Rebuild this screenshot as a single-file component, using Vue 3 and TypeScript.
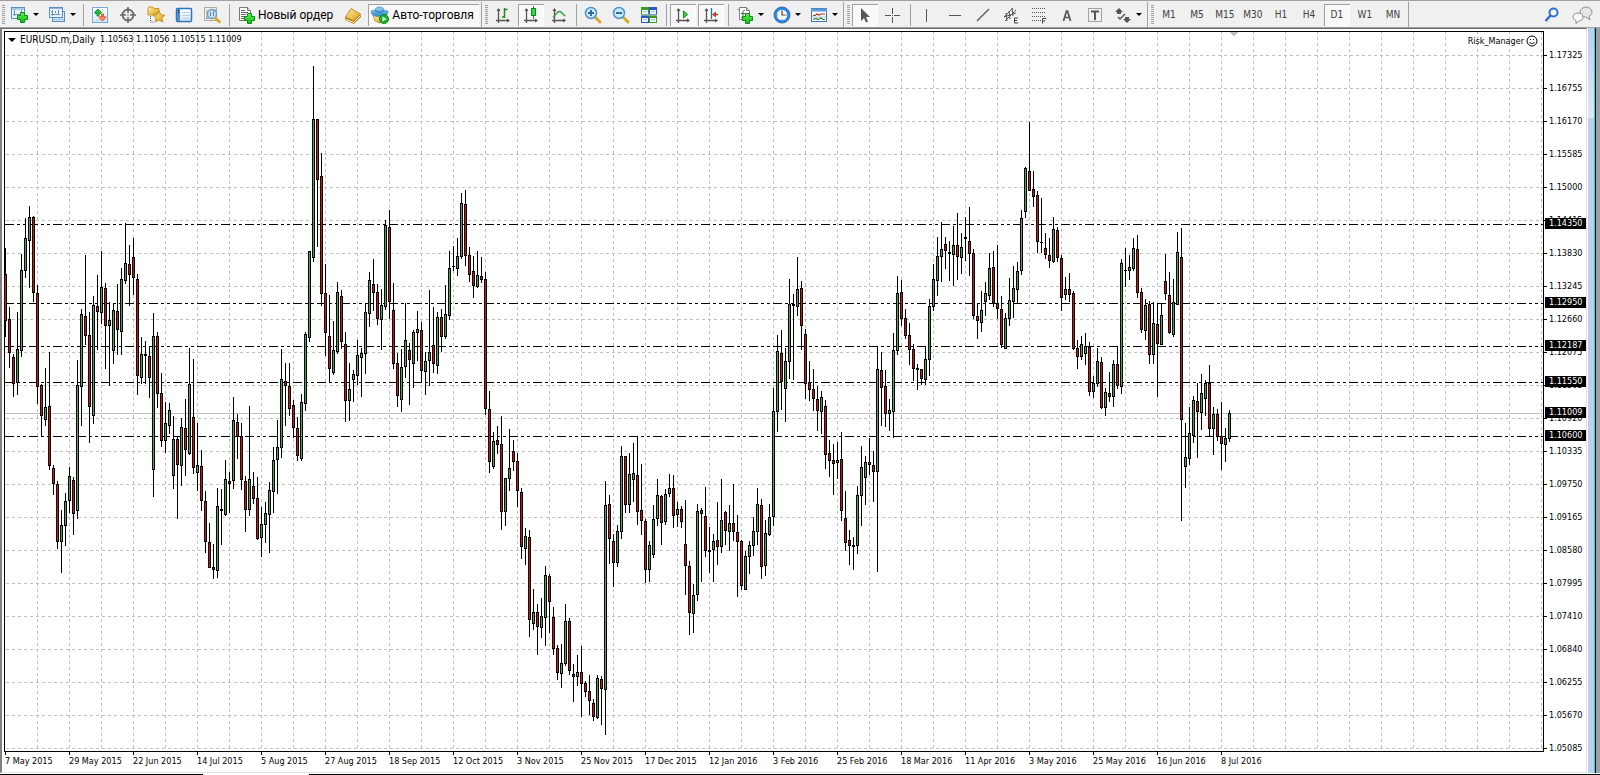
<script setup lang="ts">
interface Tool {
  id: string
  label: string
  kind?: 'menu' | 'sep' | 'text'
  active?: boolean
}

type Candle = [high: number, top: number, bottom: number, low: number, dir: number]

const sep = (id: string): Tool => ({ id, label: '', kind: 'sep' })

const groups: Tool[][] = [
  [
    { id: 'newchart', label: 'Новый график', kind: 'menu' },
    { id: 'profiles', label: 'Профили', kind: 'menu' },
    sep('s1'),
    { id: 'market', label: 'Обзор рынка' },
    { id: 'target', label: 'Окно данных' },
    { id: 'favorites', label: 'Навигатор' },
    { id: 'terminal', label: 'Терминал' },
    { id: 'tester', label: 'Тестер стратегий' },
    sep('s2'),
    { id: 'order', label: 'Новый ордер', kind: 'text' },
    { id: 'editor', label: 'MetaEditor' },
    { id: 'auto', label: 'Авто-торговля', kind: 'text', active: true },
  ],
  [
    { id: 'bars', label: 'Бары' },
    { id: 'candles', label: 'Японские свечи', active: true },
    { id: 'line', label: 'Линия' },
    sep('s3'),
    { id: 'zoomin', label: 'Увеличить' },
    { id: 'zoomout', label: 'Уменьшить' },
    { id: 'tile', label: 'Расположить окна' },
    sep('s4'),
    { id: 'scroll', label: 'Автопрокрутка', active: true },
    { id: 'shift', label: 'Сдвиг графика', active: true },
    sep('s5'),
    { id: 'indicators', label: 'Индикаторы', kind: 'menu' },
    { id: 'clock', label: 'Периоды', kind: 'menu' },
    { id: 'template', label: 'Шаблоны', kind: 'menu' },
  ],
  [
    { id: 'cursor', label: 'Курсор', active: true },
    { id: 'cross', label: 'Перекрестие' },
    sep('s6'),
    { id: 'vline', label: 'Вертикальная линия' },
    { id: 'hline', label: 'Горизонтальная линия' },
    { id: 'trend', label: 'Трендовая линия' },
    { id: 'channel', label: 'Равноудаленный канал' },
    { id: 'fibo', label: 'Линии Фибоначчи' },
    { id: 'text', label: 'Текст' },
    { id: 'textlabel', label: 'Текстовая метка' },
    { id: 'arrows', label: 'Стрелки', kind: 'menu' },
  ],
]

const timeframes = ['M1', 'M5', 'M15', 'M30', 'H1', 'H4', 'D1', 'W1', 'MN']

const prices = [
  '1.17325', '1.16755', '1.16170', '1.15585', '1.15000', '1.14415', '1.13830', '1.13245',
  '1.12660', '1.12075', '1.11505', '1.10920', '1.10335', '1.09750', '1.09165', '1.08580',
  '1.07995', '1.07410', '1.06840', '1.06255', '1.05670', '1.05085',
]

const dates = [
  '7 May 2015', '29 May 2015', '22 Jun 2015', '14 Jul 2015', '5 Aug 2015', '27 Aug 2015',
  '18 Sep 2015', '12 Oct 2015', '3 Nov 2015', '25 Nov 2015', '17 Dec 2015', '12 Jan 2016',
  '3 Feb 2016', '25 Feb 2016', '18 Mar 2016', '11 Apr 2016', '3 May 2016', '25 May 2016',
  '16 Jun 2016', '8 Jul 2016',
]

const levels = [
  { price: '1.14350', y: 224 },
  { price: '1.12950', y: 303 },
  { price: '1.12187', y: 346 },
  { price: '1.11550', y: 382 },
  { price: '1.10600', y: 436 },
]
const current = { price: '1.11009', y: 413 }
const tags = [...levels, current]

const axisTop = 31
const vLines = Array.from({ length: 90 }, (_, i) => 37 + i * 32)
const hLines = Array.from({ length: 22 }, (_, i) => 55 + i * 33)

const D = 0
const U = 1
const candles: Candle[] = [
  [248,274,321,337,D],[307,319,353,368,D],[354,357,384,397,D],[312,349,383,395,U],[254,270,351,357,U],
  [218,238,271,278,U],[206,217,241,288,U],[216,217,293,302,D],[285,293,387,404,D],[384,385,416,437,D],
  [368,407,420,426,U],[352,406,466,470,D],[465,468,484,495,D],[481,484,542,549,D],[510,525,542,573,U],
  [493,501,526,546,U],[467,476,501,513,U],[477,480,514,535,D],[360,385,511,519,U],[309,314,387,426,U],
  [255,316,336,345,D],[312,335,407,443,D],[296,305,416,424,U],[275,306,312,350,D],[251,287,313,324,U],
  [283,288,326,369,D],[302,320,326,386,U],[303,310,351,364,U],[284,311,330,355,D],[268,279,332,355,U],
  [223,263,281,284,U],[245,264,275,306,D],[238,257,278,295,D],[274,279,376,395,D],[337,354,378,384,U],
  [341,354,356,384,U],[347,356,378,398,D],[313,336,470,497,U],[332,336,394,408,D],[373,393,441,447,D],
  [402,423,441,453,U],[403,410,426,434,U],[416,439,476,489,U],[436,439,465,519,D],[418,427,466,486,U],
  [399,428,450,476,D],[348,384,454,455,U],[359,417,468,474,D],[423,465,473,491,U],[450,466,501,511,D],
  [491,501,542,553,D],[523,542,568,568,D],[544,567,570,579,D],[488,506,571,578,U],[489,509,511,545,U],
  [460,479,515,516,U],[472,481,484,513,D],[397,420,481,489,U],[414,422,437,459,D],[423,436,480,490,D],
  [476,481,510,532,D],[406,479,510,516,U],[472,486,499,504,D],[477,498,539,540,D],[507,524,538,557,U],
  [502,513,525,543,U],[482,490,515,553,U],[447,460,492,513,U],[420,447,460,494,U],[349,379,448,458,U],
  [363,381,386,426,D],[363,386,409,416,D],[400,405,428,438,D],[417,428,456,461,D],[394,402,459,461,U],
  [332,334,404,411,U],[251,251,338,342,U],[66,119,258,262,U],[119,119,180,247,D],[153,176,294,306,D],
  [264,293,333,356,D],[295,336,369,383,D],[321,350,373,375,U],[282,292,352,354,U],[290,296,342,349,D],
  [332,344,401,422,D],[363,389,401,421,U],[370,374,380,402,U],[340,355,376,385,U],[348,353,358,397,U],
  [303,312,354,374,U],[272,280,314,327,U],[259,284,293,311,D],[284,292,319,325,D],[289,305,320,350,U],
  [220,225,307,310,U],[210,227,302,319,D],[283,310,364,369,D],[353,363,396,407,D],[349,367,400,412,U],
  [303,340,367,378,U],[343,350,360,405,D],[330,332,364,388,U],[311,329,333,361,U],[322,330,371,383,D],
  [352,361,372,395,U],[290,352,361,386,U],[307,345,364,373,D],[312,317,366,374,U],[309,317,337,352,D],
  [285,314,337,339,U],[251,268,316,320,U],[246,266,267,271,U],[238,256,269,276,U],[193,203,257,259,U],
  [190,204,256,266,D],[247,255,275,282,D],[256,271,286,298,D],[251,275,287,288,U],[257,276,280,283,D],
  [272,279,409,415,D],[391,409,462,473,D],[432,441,467,469,U],[426,440,445,454,D],[416,444,512,530,D],
  [478,478,512,526,U],[429,468,479,491,U],[440,451,462,471,D],[453,461,491,507,D],[488,492,547,559,D],
  [528,536,549,565,U],[530,537,620,637,D],[589,612,624,630,U],[604,612,627,655,D],[598,616,628,638,U],
  [566,575,618,646,U],[574,576,602,633,D],[607,617,649,655,D],[645,648,673,680,D],[644,663,674,688,U],
  [604,621,664,666,U],[618,621,671,675,D],[664,674,677,702,D],[655,672,677,686,U],[646,672,684,717,D],
  [681,683,692,697,D],[675,691,701,715,D],[699,703,717,721,D],[675,678,718,719,U],[676,679,689,725,D],
  [481,505,690,735,U],[495,504,539,564,D],[534,541,563,587,D],[525,531,563,567,U],[446,456,532,539,U],
  [456,456,505,513,D],[453,474,505,513,U],[443,473,480,502,U],[436,475,512,525,D],[464,510,521,535,D],
  [519,521,570,583,D],[541,545,570,582,U],[505,519,555,558,U],[479,495,519,526,U],[495,496,523,545,D],
  [489,494,522,525,U],[474,488,494,497,U],[475,488,516,528,D],[502,509,515,527,U],[506,509,522,528,D],
  [500,544,566,595,D],[561,566,613,635,D],[584,595,614,633,U],[504,511,595,601,U],[508,510,514,582,D],
  [487,516,551,557,D],[527,550,552,573,D],[534,541,550,582,U],[502,540,547,565,D],[479,520,547,553,U],
  [511,512,531,545,D],[505,523,532,551,U],[484,523,532,541,D],[515,532,542,597,D],[540,541,586,590,D],
  [551,556,590,590,U],[541,545,557,574,U],[517,531,546,556,U],[488,504,532,545,U],[499,505,567,579,D],
  [520,533,566,576,U],[504,517,535,536,U],[388,411,517,526,U],[335,351,412,432,U],[330,353,382,410,D],
  [348,361,389,422,U],[279,304,362,379,U],[294,304,306,380,U],[257,289,307,316,U],[281,288,326,350,D],
  [329,334,384,399,D],[361,382,390,401,D],[369,389,399,411,D],[386,399,411,431,D],[391,397,412,434,U],
  [400,406,455,469,D],[440,453,461,477,D],[444,460,464,495,D],[442,460,463,479,U],[432,459,511,521,D],
  [491,518,543,551,D],[530,540,546,565,D],[537,545,547,570,D],[486,495,546,554,U],[446,467,496,526,U],
  [456,462,478,505,U],[438,462,465,475,D],[451,465,472,502,D],[346,369,472,572,U],[352,370,388,426,D],
  [370,386,414,427,D],[399,410,414,431,U],[333,350,412,438,U],[276,293,351,355,U],[280,292,319,326,D],
  [309,318,336,339,D],[323,335,350,365,D],[344,349,369,381,D],[364,368,370,390,D],[369,369,379,385,D],
  [346,359,380,385,U],[299,306,360,376,U],[264,279,307,311,U],[237,256,281,296,U],[222,249,257,282,U],
  [237,244,251,269,D],[241,252,254,281,D],[226,245,255,286,U],[213,245,257,280,D],[233,247,258,274,U],
  [217,237,239,261,U],[207,241,254,276,D],[249,253,316,319,D],[303,316,321,339,D],[291,310,323,332,U],
  [282,293,302,316,U],[253,268,296,300,U],[251,267,303,307,D],[245,303,309,319,D],[296,309,345,348,D],
  [313,318,349,349,U],[278,300,319,326,U],[266,288,302,318,U],[262,271,290,303,U],[210,218,271,275,U],
  [167,168,212,218,U],[122,171,191,191,D],[171,189,197,207,D],[191,195,242,253,D],[198,242,243,253,D],
  [233,248,255,259,D],[238,255,261,268,D],[217,229,262,263,U],[227,230,258,262,D],[255,258,298,311,D],
  [277,289,295,300,U],[273,289,295,302,D],[291,293,349,350,D],[340,348,357,369,D],[336,344,357,360,U],
  [333,346,354,365,U],[342,347,392,396,D],[376,383,392,398,U],[348,361,384,387,U],[357,362,408,409,D],
  [388,392,408,416,U],[372,393,397,402,D],[360,364,397,407,U],[346,364,386,389,D],[259,263,387,394,U],
  [248,270,271,287,U],[255,267,271,280,U],[238,248,269,271,U],[235,249,293,298,D],[288,292,330,333,D],
  [299,305,331,340,U],[301,304,355,364,D],[302,323,355,364,U],[303,324,344,397,D],[303,315,345,345,U],
  [254,281,294,300,D],[272,295,333,334,D],[279,302,335,337,U],[232,252,305,305,U],[228,257,420,521,D],
  [423,457,467,488,U],[407,433,459,465,U],[396,400,436,443,U],[383,401,412,458,D],[374,393,413,430,U],
  [380,383,399,416,U],[365,383,429,437,D],[407,414,429,455,U],[409,414,437,441,D],[402,436,444,470,D],
  [428,438,445,462,U],[410,413,439,442,U],
]

const candleX = (i: number) => 5 + i * 4
const box = (x: number, y: number, w: number, h: number) => `M${x} ${y}h${w}v${h}h${-w}z`

const wicks = candles.map(([h, , , l], i) => box(candleX(i), h, 1, l - h)).join('')
const bodies = candles.map(([, t, b], i) => box(candleX(i) - 1, t, 3, b - t)).join('')
const fills = (dir: number) =>
  candles
    .map(([, t, b, , d], i) => (d === dir && b - t > 2 ? box(candleX(i), t + 1, 1, b - t - 2) : ''))
    .join('')
const bullFill = fills(U)
const bearFill = fills(D)
</script>

<template>
  <svg class="defs" aria-hidden="true">
    <defs>
      <linearGradient id="gGreen" x1="0" y1="0" x2="0" y2="1"><stop offset="0" stop-color="#5cf05c" /><stop offset="1" stop-color="#12b812" /></linearGradient>
      <linearGradient id="gGold" x1="0" y1="0" x2="1" y2="1"><stop offset="0" stop-color="#fff0a0" /><stop offset="1" stop-color="#d89a18" /></linearGradient>
      <linearGradient id="gBlue" x1="0" y1="0" x2="0" y2="1"><stop offset="0" stop-color="#9ad2f6" /><stop offset="1" stop-color="#2f86c8" /></linearGradient>
      <linearGradient id="gPane" x1="0" y1="0" x2="0" y2="1"><stop offset="0" stop-color="#ffffff" /><stop offset="1" stop-color="#d5e6f6" /></linearGradient>
    </defs>
    <symbol id="i-newchart" viewBox="0 0 18 18">
      <rect x=".5" y="1.500" width="13" height="11" fill="#e8f2fb" stroke="#5b8dbd" /><path d="M1 3h12" stroke="#a9c9e8" stroke-width="2" />
      <path d="M3.500 4v6M2 8.500h9M10.500 4v5" stroke="#6f93b5" fill="none" />
      <path d="M9.500 6.500h4v3h3v4h-3v3h-4v-3h-3v-4h3z" fill="url(#gGreen)" stroke="#0b8f16" />
    </symbol>
    <symbol id="i-profiles" viewBox="0 0 18 18">
      <rect x="4.500" y="5.500" width="12" height="10" fill="#e8f2fb" stroke="#5b8dbd" /><path d="M5 13.500h11" stroke="#a9c9e8" stroke-width="2" />
      <rect x="1.500" y="1.500" width="13" height="10" fill="#e8f2fb" stroke="#5b8dbd" /><path d="M2 2.500h12" stroke="#8fb7de" />
      <path d="M4.500 4v6M3 8.500h9M7.500 5v2M10.500 4v4M3 5.500h2" stroke="#6f93b5" />
    </symbol>
    <symbol id="i-market" viewBox="0 0 18 18">
      <rect x="1.500" y="1.500" width="15" height="15" fill="url(#gPane)" stroke="#78a9d8" /><path d="M4 5h2m-2 3h2m5-4h3m-3 8h3m-9 2h4" stroke="#c5d3e0" />
      <path d="m7 3 3.500 3.500-1.500 1.500-1-1v3H6V7L5 8 3.500 6.500z" fill="#22c02e" stroke="#0b8f16" stroke-width=".8" />
      <path d="m11.500 15-3.500-3.500 1.500-1.500 1 1V8h2v3l1-1 1.500 1.500z" fill="#ff8a60" stroke="#d03c1c" stroke-width=".8" />
    </symbol>
    <symbol id="i-target" viewBox="0 0 18 18">
      <circle cx="9" cy="9" r="5.500" fill="none" stroke="#6a6a6a" stroke-width="1.800" /><path d="M9 1v6M9 11v6M1 9h6M11 9h6" stroke="#6a6a6a" stroke-width="1.500" /><circle cx="9" cy="9" r="1" fill="#aaa" />
    </symbol>
    <symbol id="i-favorites" viewBox="0 0 18 18">
      <path d="M1 8V2l1-1h4l1 1.500h5V9H1z" fill="url(#gGold)" stroke="#c99a2a" /><path d="M3.500 10v6h4" stroke="#555" stroke-dasharray="1 1" fill="none" />
      <path d="m12 5 1.800 3.700 4 .5-3 2.700.8 4-3.600-2-3.600 2 .8-4-3-2.700 4-.5z" fill="url(#gGold)" stroke="#c88f1c" />
    </symbol>
    <symbol id="i-terminal" viewBox="0 0 18 18">
      <rect x="1.500" y="2.500" width="15" height="13" rx="1" fill="url(#gPane)" stroke="#2f74bd" stroke-width="1.500" /><path d="M3.500 3v12" stroke="#4b8ed0" stroke-width="3" /><path d="M3.500 4v1m0 1v1" stroke="#123" stroke-width="1" /><path d="M7 6.500h8m-8 3h8m-8 3h8" stroke="#b8cfe6" />
    </symbol>
    <symbol id="i-tester" viewBox="0 0 18 18">
      <path d="M1.500 1.500h12v13h-12z" fill="#f3f0ea" stroke="#b7a98f" /><path d="M4 4v9M12 3v3M6 4h5M3 12h4" stroke="#6d93bd" />
      <circle cx="9" cy="8" r="4.500" fill="#bfe0f5" fill-opacity=".85" stroke="#6e9cc4" stroke-width="1.300" /><path d="M7.500 6v4m3-5v5" stroke="#5e86ae" /><path d="m12.500 12 4 4" stroke="#d9a62c" stroke-width="2.500" stroke-linecap="round" />
    </symbol>
    <symbol id="i-order" viewBox="0 0 18 18">
      <path d="M1.500 1.500h8l3 3v10h-11z" fill="#fff" stroke="#777" /><path d="M9.500 1.500v3h3" fill="#ddd" stroke="#777" /><path d="M3 4.500h4m-4 2h7m-7 2h5m-5 2h4m-4 2h4" stroke="#666" />
      <path d="M9.500 7.500h4v3h3v4h-3v3h-4v-3h-3v-4h3z" fill="url(#gGreen)" stroke="#0b8f16" />
    </symbol>
    <symbol id="i-editor" viewBox="0 0 18 18">
      <path d="M1.500 11.500 10 15l6.500-7v3L10 17.500 2 14z" fill="#c98a18" stroke="#9d6a10" stroke-width=".8" />
      <path d="m2 13.500 8 3 6.500-7" fill="none" stroke="#fff3cc" />
      <path d="M1.500 11 7 2.500 16.500 8 10 15z" fill="url(#gGold)" stroke="#b87d14" stroke-width=".8" />
    </symbol>
    <symbol id="i-auto" viewBox="0 0 18 18">
      <path d="M2 9h13l-1 5-5 3-5-2z" fill="url(#gGold)" stroke="#c99a2a" />
      <path d="M0 6c0-2 2-1.500 4-1.500C4 2 6 1 8.500 1S13 2 13 4.500c2 0 4-.5 4 1.500 0 3-4 4.500-8.500 4.500S0 9 0 6z" fill="url(#gBlue)" stroke="#4a93c4" stroke-width=".8" /><path d="M4 4.500c2 2 7 2 9 0" stroke="#2a74ad" fill="none" />
      <circle cx="13" cy="13" r="4.500" fill="#18b428" stroke="#0a8a18" /><path d="m11.500 10.500 4 2.500-4 2.500z" fill="#fff" />
    </symbol>
    <symbol id="i-bars" viewBox="0 0 18 18">
      <path d="M4.500 3v14M2 14.500h13" stroke="#555" stroke-width="1.300" /><path d="m2.500 5 2-3 2 3zM13 12.500l3 2-3 2z" fill="#555" /><path d="M10.500 2v10M8 11h3M10 3.500h3.500" stroke="#1f8c28" stroke-width="1.500" />
    </symbol>
    <symbol id="i-candles" viewBox="0 0 18 18">
      <path d="M4.500 3v14M2 14.500h13" stroke="#555" stroke-width="1.300" /><path d="m2.500 5 2-3 2 3zM13 12.500l3 2-3 2z" fill="#555" /><path d="M11.500 0v13" stroke="#1f8c28" /><rect x="9.500" y="2.500" width="4" height="7" fill="#30d848" stroke="#128a20" />
    </symbol>
    <symbol id="i-line" viewBox="0 0 18 18">
      <path d="M4.500 3v14M2 14.500h13" stroke="#555" stroke-width="1.300" /><path d="m2.500 5 2-3 2 3zM13 12.500l3 2-3 2z" fill="#555" /><path d="M3 11.500c3-3 4-6 6.500-6s3 3 6 4.500" stroke="#2f9e3a" stroke-width="1.300" fill="none" />
    </symbol>
    <symbol id="i-zoomin" viewBox="0 0 18 18">
      <path d="m11 11 5 5" stroke="#d9a62c" stroke-width="3" stroke-linecap="round" /><circle cx="7" cy="7" r="5.500" fill="#cfe9fb" stroke="#4a94d2" stroke-width="1.500" /><path d="M7 4v6M4 7h6" stroke="#2d6ea8" stroke-width="2" />
    </symbol>
    <symbol id="i-zoomout" viewBox="0 0 18 18">
      <path d="m11 11 5 5" stroke="#d9a62c" stroke-width="3" stroke-linecap="round" /><circle cx="7" cy="7" r="5.500" fill="#cfe9fb" stroke="#4a94d2" stroke-width="1.500" /><path d="M4 7h6" stroke="#2d6ea8" stroke-width="2" />
    </symbol>
    <symbol id="i-tile" viewBox="0 0 18 18">
      <path d="M1 1h8v8H1z" fill="#3f9c1e" /><path d="M9 1h8v8H9z" fill="#2b56c8" /><path d="M1 9h8v8H1z" fill="#2b56c8" /><path d="M9 9h8v8H9z" fill="#3f9c1e" /><path d="M2 4h6v4H2zm8 0h6v4h-6zM2 12h6v4H2zm8 0h6v4h-6z" fill="#eef4fb" /><path d="M3 5.500h4m4 0h4m-12 8h4m4 0h4" stroke="#a9c2dd" /><path d="M1 9h16" stroke="#fff" stroke-width=".7" />
    </symbol>
    <symbol id="i-scroll" viewBox="0 0 18 18">
      <path d="M4.500 3v14M2 14.500h13" stroke="#555" stroke-width="1.300" /><path d="m2.500 5 2-3 2 3zM13 12.500l3 2-3 2z" fill="#555" /><path d="m9.500 5 4 3.500-4 3.500z" fill="#38d84a" stroke="#128a20" />
    </symbol>
    <symbol id="i-shift" viewBox="0 0 18 18">
      <path d="M4.500 3v14M2 14.500h13" stroke="#555" stroke-width="1.300" /><path d="m2.500 5 2-3 2 3zM13 12.500l3 2-3 2z" fill="#555" /><path d="M9.500 2v11" stroke="#1b6fb0" stroke-width="1.300" /><path d="M12 8.500h4" stroke="#c23a1a" stroke-width="1.500" /><path d="m10 8.500 4-3v6z" fill="#c23a1a" />
    </symbol>
    <symbol id="i-indicators" viewBox="0 0 18 18">
      <path d="M3.500 1.500h7l3 3v9h-10z" fill="#fff" stroke="#777" /><path d="M10.500 1.500v3h3" fill="#ddd" stroke="#777" /><path d="M1.500 3.500h2v10h6" fill="none" stroke="#888" /><path d="M9 4.500c-2-1-2 1-2 3v3c0 1 0 2-2 1M5 7.500h4" fill="none" stroke="#555" />
      <path d="M9.500 7.500h4v3h3v4h-3v3h-4v-3h-3v-4h3z" fill="url(#gGreen)" stroke="#0b8f16" />
    </symbol>
    <symbol id="i-clock" viewBox="0 0 18 18">
      <circle cx="9" cy="9" r="6.500" fill="#f7fbff" stroke="#2a86e0" stroke-width="2.500" /><circle cx="9" cy="9" r="8" fill="none" stroke="#0e4c9c" stroke-width=".8" /><path d="M9 5v4h3.500" fill="none" stroke="#444" stroke-width="1.200" /><path d="M9 4v1M9 13v1M4 9h1M13 9h1" stroke="#888" />
    </symbol>
    <symbol id="i-template" viewBox="0 0 18 18">
      <rect x="1.500" y="2.500" width="15" height="13" fill="#fff" stroke="#3c78b8" /><path d="M1 4h16" stroke="#5b9ad8" stroke-width="3" /><path d="M3 9.500h2l2-1.500 2 1 2-1h4" fill="none" stroke="#a8341f" stroke-width="1.200" /><path d="M2 11h14" stroke="#a9c2dd" /><path d="M3 13.500 6 12.500l2 1 3-1.500 2 1.500h2" fill="none" stroke="#2d8a38" stroke-width="1.200" />
    </symbol>
    <symbol id="i-cursor" viewBox="0 0 18 18"><path d="M5 2v13l3-3 2 4.500 2-1-2-4.500h4z" fill="#555" /></symbol>
    <symbol id="i-cross" viewBox="0 0 18 18"><path d="M8.500 2v6m0 3v6M1 9.500h6m3 0h6" stroke="#555" /><path d="M8 9h1v1H8z" fill="#555" /></symbol>
    <symbol id="i-vline" viewBox="0 0 18 18"><path d="M8.500 3v13" stroke="#555" /></symbol>
    <symbol id="i-hline" viewBox="0 0 18 18"><path d="M3 9.500h12" stroke="#555" /></symbol>
    <symbol id="i-trend" viewBox="0 0 18 18"><path d="M3 15 15 3" stroke="#555" stroke-width="1.200" /></symbol>
    <symbol id="i-channel" viewBox="0 0 18 18"><path d="m2 11 9-9M3 15 14 4M4 7l1 8M7 5l1 8m2-11 1 8M2 11l12-4" stroke="#555" fill="none" /><path d="M16 12h-3.500v5H16m-3.500-2.500H15" stroke="#444" fill="none" /></symbol>
    <symbol id="i-fibo" viewBox="0 0 18 18"><path d="M2 2.500h14M2 6.500h14M2 10.500h14M2 14.500h9" stroke="#555" stroke-dasharray="1 1" /><path d="M16 12.500h-3.500v5m0-2.500H15" stroke="#444" fill="none" /></symbol>
    <symbol id="i-text" viewBox="0 0 18 18"><path d="M5.500 15 8.500 5h1l3 10M6.500 11.500h5" stroke="#555" stroke-width="1.700" fill="none" /></symbol>
    <symbol id="i-textlabel" viewBox="0 0 18 18"><rect x="2.500" y="2.500" width="13" height="13" fill="none" stroke="#555" stroke-dasharray="1 1" /><path d="M5 5.500h8M9 5v9" stroke="#555" stroke-width="2" fill="none" /></symbol>
    <symbol id="i-arrows" viewBox="0 0 18 18"><path d="m5 2 4 4H7v2H3V6H1zM13 17l-4-4h2v-2h4v2h2z" fill="#555" /><path d="m4 11 2 2 5-5" fill="none" stroke="#555" stroke-width="1.500" /></symbol>
  </svg>

  <div class="terminal">
    <header class="toolbar">
      <div v-for="(group, g) in groups" :key="g" class="group">
        <span class="grip"></span>
        <template v-for="tool in group" :key="tool.id">
          <span v-if="tool.kind === 'sep'" class="separator"></span>
          <button v-else type="button" class="tool" :class="[tool.kind, { active: tool.active }]" :aria-label="tool.label">
            <svg class="icon"><use :href="'#i-' + tool.id" /></svg>
            <span v-if="tool.kind === 'text'">{{ tool.label }}</span>
            <span v-if="tool.kind === 'menu'" class="caret"></span>
          </button>
        </template>
      </div>
      <div class="group">
        <span class="grip"></span>
        <button v-for="tf in timeframes" :key="tf" type="button" class="tool timeframe" :class="{ active: tf === 'D1' }">{{ tf }}</button>
      </div>
      <div class="extras">
        <button type="button" class="extra" aria-label="Поиск">
          <svg width="18" height="18" viewBox="0 0 18 18"><circle cx="10.500" cy="6.500" r="4" fill="#f4f8fe" stroke="#2e6fd6" stroke-width="2" /><path d="m7.500 9.500-5 5.500" stroke="#2e6fd6" stroke-width="2.500" /></svg>
        </button>
        <button type="button" class="extra" aria-label="Сообщения">
          <svg width="24" height="20" viewBox="0 0 24 20"><path d="M9 7a6 5 0 1 1 9 4.500l1 3.500-4-3A6 5 0 0 1 9 7z" fill="#e6e6e6" stroke="#8e8e8e" /><path d="M2 12a5 4 0 1 1 6 4l-3 2.500V15.500A5 4 0 0 1 2 12z" fill="#fafafa" stroke="#8e8e8e" /></svg>
        </button>
      </div>
    </header>

    <div class="workspace">
      <main class="chart">
        <div class="upper">
          <section class="plot">
            <svg class="canvas" role="img" aria-label="EURUSD.m, Daily" shape-rendering="crispEdges">
              <g transform="translate(-5 -32)">
                <g class="grid">
                  <line v-for="x in vLines" :key="x" :x1="x + 0.5" :x2="x + 0.5" y1="31" y2="751" />
                  <line v-for="y in hLines" :key="y" x1="6" x2="2900" :y1="y + 0.5" :y2="y + 0.5" />
                </g>
                <rect class="bid" x="5" :y="current.y" width="2900" height="1" />
                <line v-for="l in levels" :key="l.y" class="level" x1="5" x2="2900" :y1="l.y + 0.5" :y2="l.y + 0.5" />
                <path :d="wicks" fill="#000" />
                <path :d="bodies" fill="#000" />
                <path :d="bullFill" class="bull" />
                <path :d="bearFill" class="bear" />
                <path d="M1229 32h9l-4 4h-1z" fill="#c0c0c0" />
              </g>
            </svg>
            <div class="caption"><span class="caret"></span><span class="symbol">EURUSD.m,Daily</span><span>1.10563 1.11056 1.10515 1.11009</span></div>
            <div class="expert">
              <span>Risk_Manager</span>
              <svg width="12" height="12" viewBox="0 0 12 12"><circle cx="6" cy="6" r="5" fill="#fff" stroke="#000" /><path d="M4 4h1v1H4zm3 0h1v1H7z" /><path d="M3.500 7c1 2 4 2 5 0" fill="none" stroke="#000" /></svg>
            </div>
          </section>
          <aside class="prices">
            <div v-for="p in prices" :key="p" class="price">{{ p }}</div>
            <div v-for="t in tags" :key="t.price" class="tag" :style="{ top: t.y - axisTop - 6 + 'px' }">{{ t.price }}</div>
          </aside>
        </div>
        <footer class="dates">
          <span v-for="d in dates" :key="d" class="date">{{ d }}</span>
        </footer>
      </main>
      <div class="edge"><span class="thumb"></span></div>
    </div>
    <div class="taskline"><span></span></div>
  </div>
</template>

<style>
body { margin: 0; background: #fff; }
</style>

<style scoped>
.defs { position: absolute; width: 0; height: 0; }
.terminal {
  display: flex;
  flex-direction: column;
  height: 100vh;
  overflow: hidden;
  background: #fff;
  color: #000;
  font: 9px/11px "DejaVu Sans Condensed", "DejaVu Sans", sans-serif;
}
button { margin: 0; border: 0; background: none; color: inherit; font: inherit; }

.toolbar {
  display: flex;
  flex: none;
  height: 25px;
  padding-top: 1px;
  border-top: 1px solid #a0a0a0;
  border-bottom: 1px solid #a0a0a0;
  background: #f0f0f0;
}
.group {
  display: flex;
  align-items: center;
  padding: 0 1px 0 2px;
  border-right: 1px solid #a0a0a0;
}
.group + .group { padding-left: 3px; }
.grip {
  width: 3px;
  height: 20px;
  margin-right: 1px;
  background: repeating-linear-gradient(#a0a0a0 0 1px, #f0f0f0 1px 2px);
}
.separator { width: 1px; height: 22px; margin: 0 2px 0 3px; background: #a0a0a0; }
.tool {
  display: flex;
  flex: none;
  align-items: center;
  justify-content: center;
  width: 28px;
  height: 24px;
  padding: 0;
}
.tool.active {
  width: 26px;
  height: 22px;
  margin: 0 1px;
  background: #f8f8f8;
  box-shadow: inset 1px 1px #a0a0a0, inset -1px -1px #fff;
}
.tool.menu { justify-content: flex-start; gap: 4px; width: 37px; padding-left: 5px; }
.tool.text { gap: 2px; width: auto; padding: 0 6px; font: 12px/16px Roboto, "Noto Sans", sans-serif; }
.tool.text.active { width: auto; padding: 0 5px 0 3px; gap: 3px; }
.icon { display: block; width: 18px; height: 18px; }
.caret { border: 3px solid transparent; border-top-color: #000; border-bottom: 0; }
.timeframe { color: #404040; font-size: 10px; }
.extras { display: flex; align-items: center; gap: 10px; margin-left: auto; padding-right: 5px; }
.extra { display: flex; padding: 0; }

.workspace {
  display: flex;
  flex: 1;
  min-height: 0;
  background: linear-gradient(90deg, #fff calc(100% - 5px), #a0a0a0 calc(100% - 5px));
}
.chart {
  display: flex;
  flex: 1;
  flex-direction: column;
  min-width: 0;
  padding: 2px 0 0 2px;
  border-top: 1px solid #696969;
  border-left: 2px solid #808080;
  border-right: 1px solid #e3e3e3;
  border-bottom: 1px solid #e3e3e3;
}
.upper { display: flex; flex: 1; min-height: 0; }
.plot { position: relative; flex: 1; min-width: 0; border: 1px solid #000; }
.canvas { display: block; position: absolute; width: 100%; height: 100%; }
.grid line { stroke: #c0c0c0; stroke-dasharray: 3 3; }
.level { stroke: #000; stroke-dasharray: 9 3 3 3 3 3; }
.bid { fill: #c0c0c0; }
.bull { fill: #2fb93a; }
.bear { fill: #e80808; }
.caption { position: absolute; display: flex; align-items: center; top: 2px; left: 3px; }
.caption .symbol { margin: 0 5px 0 4px; font-size: 10px; }
.caption .caret { border-width: 4px 4px 0; }
.expert { position: absolute; display: flex; align-items: center; gap: 2px; top: 3px; right: 5px; }

.prices { position: relative; width: 42px; padding-top: 8px; }
.price { position: relative; height: 33px; padding-left: 5px; line-height: 33px; }
.price::before { content: ""; position: absolute; left: 0; top: 16px; width: 3px; height: 1px; background: #000; }
.tag { position: absolute; left: 1px; right: 0; height: 11px; padding-left: 4px; background: #000; color: #fff; }

.dates { display: flex; height: 20px; padding-left: 1px; overflow: hidden; white-space: nowrap; }
.date { position: relative; flex: none; width: 64px; line-height: 19px; }
.date::before { content: ""; position: absolute; left: 0; top: 0; width: 1px; height: 3px; background: #000; }

.edge {
  width: 6px;
  margin: 0 5px 0 1px;
  border-right: 1px solid #35c5f0;
  background: #b9d1ea;
  box-shadow: 1px 0 #000;
}
.thumb { display: block; height: 90px; background: linear-gradient(#b9d1ea, #dbe8f6); }
.taskline { flex: none; height: 1px; padding: 1px 0 0 203px; background: linear-gradient(#fff 1px, #000 1px); }
.taskline span { display: block; width: 106px; height: 1px; background: #fff; }
</style>
